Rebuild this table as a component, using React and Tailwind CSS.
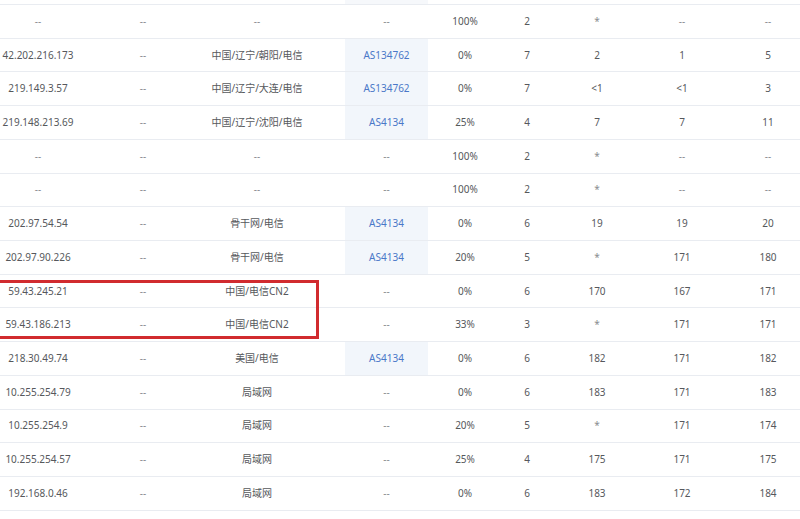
const rows = [
  ['--', '--', '--', '--', '100%', '2', '*', '--', '--'],
  ['42.202.216.173', '--', '中国/辽宁/朝阳/电信', 'AS134762', '0%', '7', '2', '1', '5'],
  ['219.149.3.57', '--', '中国/辽宁/大连/电信', 'AS134762', '0%', '7', '<1', '<1', '3'],
  ['219.148.213.69', '--', '中国/辽宁/沈阳/电信', 'AS4134', '25%', '4', '7', '7', '11'],
  ['--', '--', '--', '--', '100%', '2', '*', '--', '--'],
  ['--', '--', '--', '--', '100%', '2', '*', '--', '--'],
  ['202.97.54.54', '--', '骨干网/电信', 'AS4134', '0%', '6', '19', '19', '20'],
  ['202.97.90.226', '--', '骨干网/电信', 'AS4134', '20%', '5', '*', '171', '180'],
  ['59.43.245.21', '--', '中国/电信CN2', '--', '0%', '6', '170', '167', '171'],
  ['59.43.186.213', '--', '中国/电信CN2', '--', '33%', '3', '*', '171', '171'],
  ['218.30.49.74', '--', '美国/电信', 'AS4134', '0%', '6', '182', '171', '182'],
  ['10.255.254.79', '--', '局域网', '--', '0%', '6', '183', '171', '183'],
  ['10.255.254.9', '--', '局域网', '--', '20%', '5', '*', '171', '174'],
  ['10.255.254.57', '--', '局域网', '--', '25%', '4', '175', '171', '175'],
  ['192.168.0.46', '--', '局域网', '--', '0%', '6', '183', '172', '184'],
]

const COLS = 'grid grid-cols-[158px_52px_176px_83px_74px_50px_90px_80px_92px]'

function Cell({ value, col }) {
  if (col === 3 && value.startsWith('AS')) {
    return (
      <div className="flex items-center justify-center bg-[#f2f6fb] text-[#4a78c8]">
        {value}
      </div>
    )
  }
  const faint = value === '--' || value === '*'
  return (
    <div className={`flex items-center justify-center whitespace-nowrap ${faint ? 'text-[#8a8c90]' : ''}`}>
      {value}
    </div>
  )
}

export default function App() {
  return (
    <div
      className="relative w-[800px] h-[519px] overflow-hidden bg-white text-[10px] text-[#56585c]"
      style={{ fontFamily: '"Noto Sans", "Noto Sans CJK SC", sans-serif' }}
    >
      <div className="ml-[-41px] w-[855px]">
        {/* tail of the previous row */}
        <div className={`${COLS} h-[5px] border-b border-[#e9ecf1]`}>
          <div /><div /><div />
          <div className="bg-[#f6f8fb]" />
        </div>
        {rows.map((r, i) => (
          <div key={i} className={`${COLS} h-[33.73px] border-b border-[#e9ecf1]`}>
            {r.map((v, j) => (
              <Cell key={j} value={v} col={j} />
            ))}
          </div>
        ))}
      </div>

      {/* highlight box over the CN2 hops */}
      <div className="absolute left-[-10px] top-[280px] w-[329px] h-[59px] border-[3px] border-[#d12b2f]" />
    </div>
  )
}
